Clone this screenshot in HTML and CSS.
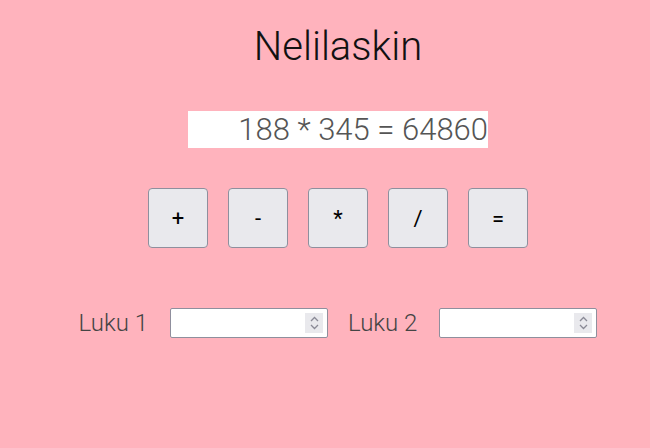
FILE: index.html
```html
<!DOCTYPE html>
<html>
<head>
<meta charset="utf-8">
<link rel="stylesheet" href="styles.css">
</head>
<body>
<div class="app">
  <h1 class="title">Nelilaskin</h1>
  <div class="result">188 * 345 = 64860</div>
  <div class="ops">
    <button class="op">+</button>
    <button class="op">-</button>
    <button class="op">*</button>
    <button class="op">/</button>
    <button class="op">=</button>
  </div>
  <div class="fields">
    <label class="label">Luku 1</label>
    <div class="num">
      <input class="num-input" type="text">
      <span class="spin"><svg width="9" height="14" viewBox="0 0 9 14"><path d="M1 5 L4.5 1.5 L8 5 M1 9 L4.5 12.5 L8 9" fill="none" stroke="#8a8a96" stroke-width="1.3"/></svg></span>
    </div>
    <label class="label">Luku 2</label>
    <div class="num">
      <input class="num-input" type="text">
      <span class="spin"><svg width="9" height="14" viewBox="0 0 9 14"><path d="M1 5 L4.5 1.5 L8 5 M1 9 L4.5 12.5 L8 9" fill="none" stroke="#8a8a96" stroke-width="1.3"/></svg></span>
    </div>
  </div>
</div>
</body>
</html>
```
FILE: styles.css
```css
html, body {
  margin: 0;
  padding: 0;
  background: #ffb3bd;
  font-family: Roboto, "Liberation Sans", sans-serif;
}
.app {
  width: 650px;
  padding-left: 26px;
  box-sizing: border-box;
  display: flex;
  flex-direction: column;
  align-items: center;
}
.title {
  margin: 23px 0 0;
  font-size: 40px;
  font-weight: 300;
  color: #111;
  line-height: 48px;
}
.result {
  margin-top: 40px;
  width: 300px;
  height: 37px;
  background: #fff;
  text-align: right;
  font-size: 31px;
  font-weight: 300;
  color: #555;
  line-height: 37px;
  box-sizing: border-box;
}
.ops {
  margin-top: 40px;
  display: flex;
  gap: 20px;
}
.op {
  width: 60px;
  height: 60px;
  background: #e9e9ed;
  border: 1px solid #8f8f9d;
  border-radius: 4px;
  font-family: Roboto, "Liberation Sans", sans-serif;
  font-size: 22px;
  color: #000;
  padding: 0;
}
.fields {
  margin-top: 60px;
  display: flex;
  align-items: center;
}
.label {
  font-size: 24px;
  font-weight: 300;
  color: #444;
  margin-right: 22px;
}
.label + .num {
  margin-right: 20px;
}
.num {
  width: 158px;
  height: 30px;
  box-sizing: border-box;
  background: #fff;
  border: 1px solid #8f8f9d;
  border-radius: 2px;
  display: flex;
  align-items: center;
  padding-right: 4px;
}
.num:last-child { margin-right: 0; }
.num-input {
  flex: 1;
  min-width: 0;
  border: none;
  outline: none;
  background: transparent;
  height: 100%;
}
.spin {
  width: 18px;
  height: 20px;
  background: #e9e9ed;
  display: flex;
  align-items: center;
  justify-content: center;
}
```
